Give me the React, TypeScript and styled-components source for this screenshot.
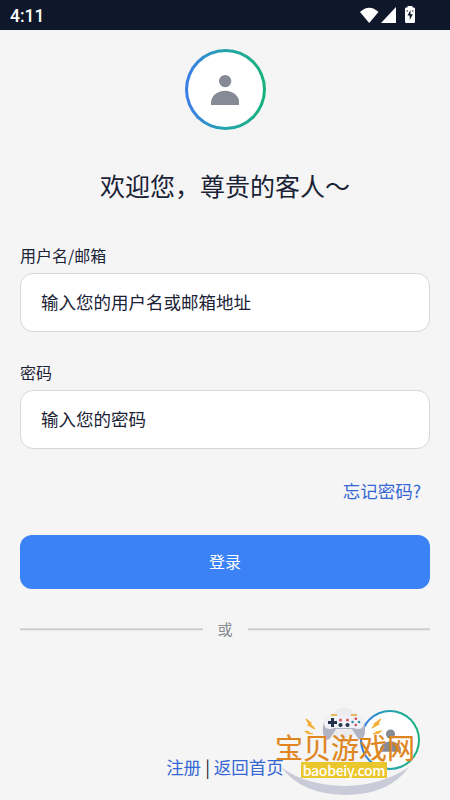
import React from 'react';
import styled, { createGlobalStyle } from 'styled-components';

const GlobalStyle = createGlobalStyle`
  * { box-sizing: border-box; }
  body { margin: 0; background: #f5f5f5; }
  button, input { font-family: inherit; }
`;

const Screen = styled.div`
  position: relative;
  width: 450px;
  height: 800px;
  overflow: hidden;
  display: flex;
  flex-direction: column;
  background: #f5f5f5;
  color: #1a2236;
  font-family: 'Noto Sans CJK SC', sans-serif;
`;

const StatusBar = styled.header`
  height: 30px;
  flex: none;
  display: flex;
  justify-content: space-between;
  padding: 0 34px 0 10px;
  background: #0f172a;
  color: #fff;
`;

const Clock = styled.span`
  font: 500 17.5px/32px Roboto, sans-serif;
`;

const StatusIcons = styled.svg`
  display: block;
  width: 57px;
  height: 30px;
`;

const Main = styled.main`
  flex: 1;
  display: flex;
  flex-direction: column;
  padding: 19px 20px 0;
`;

const Avatar = styled.div<{ $size: number }>`
  width: ${(p) => p.$size}px;
  height: ${(p) => p.$size}px;
  border: ${(p) => (p.$size > 70 ? 3 : 2)}px solid transparent;
  border-radius: 50%;
  background:
    linear-gradient(#fff, #fff) padding-box,
    linear-gradient(90deg, #3b7bea, #23a5ac 50%, #18b37b) border-box;
  display: flex;
  align-items: center;
  justify-content: center;
  svg {
    width: ${(p) => p.$size * 0.35}px;
    height: ${(p) => p.$size * 0.4}px;
    display: block;
  }
`;

const Hero = styled.div`
  display: flex;
  flex-direction: column;
  align-items: center;
`;

const Title = styled.h1`
  margin: 35px 0 0;
  font-size: 25px;
  line-height: 40px;
  font-weight: 400;
  white-space: nowrap;
`;

const Form = styled.form`
  display: flex;
  flex-direction: column;
  margin-top: 38px;
`;

const Field = styled.label`
  display: flex;
  flex-direction: column;
  height: 117px;
  font-size: 16px;
  line-height: 24px;
`;

const Input = styled.input`
  height: 59px;
  margin-top: 6px;
  padding: 0 20px 3px;
  border: 1.5px solid #d5d7da;
  border-radius: 13px;
  background: #fff;
  font-size: 17.5px;
  outline: none;
  &::placeholder { color: #1a2236; opacity: 1; }
`;

const Link = styled.a`
  color: #3568d4;
  font-size: 17.5px;
  text-decoration: none;
`;

const Forgot = styled(Link)`
  align-self: flex-end;
  margin: 1px 9px 0 0;
  line-height: 26px;
`;

const Submit = styled.button`
  height: 54px;
  margin-top: 31px;
  padding: 0 0 2px;
  border: 0;
  border-radius: 12px;
  background: #3b82f6;
  color: #fff;
  font-size: 16px;
`;

const Divider = styled.div`
  display: flex;
  align-items: center;
  gap: 15px;
  height: 24px;
  margin-top: 28px;
  color: #858990;
  font-size: 15px;
  line-height: 24px;
  &::before, &::after {
    content: '';
    flex: 1;
    height: 1.5px;
    background: #cccfd1;
    transform: translateY(0.25px);
  }
`;

const Footer = styled.footer`
  display: flex;
  justify-content: center;
  gap: 4px;
  margin-top: 113px;
  font-size: 17.5px;
  line-height: 26px;
`;

const FloatingAvatar = styled.div`
  position: absolute;
  left: 360px;
  top: 710px;
`;

const Watermark = styled.div`
  position: absolute;
  left: 270px;
  top: 700px;
  width: 160px;
  height: 100px;
`;

const Emblem = styled.svg`
  position: absolute;
  inset: 0;
  width: 160px;
  height: 100px;
`;

const BrandName = styled.div`
  position: absolute;
  left: 5px;
  top: 33px;
  font-size: 28px;
  line-height: 28px;
  color: #df8520;
  white-space: nowrap;
  -webkit-text-stroke: 0.2px #df8520;
`;

const BrandDomain = styled.div`
  position: absolute;
  left: 31px;
  top: 62px;
  width: 86px;
  height: 16px;
  display: flex;
  align-items: center;
  justify-content: center;
  background: #ebc72e;
  color: #fff;
  font-size: 14px;
  font-weight: 500;
  letter-spacing: -0.3px;
  line-height: 14px;
  padding-bottom: 1px;
`;

const Person = () => (
  <svg viewBox="0 0 28 32" fill="#858a94">
    <circle cx="14" cy="8" r="6.1" />
    <path d="M0 31.5v-2a14 12 0 0 1 28 0v2z" />
  </svg>
);

export default function App() {
  return (
    <Screen>
      <GlobalStyle />
      <StatusBar>
        <Clock>4:11</Clock>
        <StatusIcons viewBox="0 0 57 30" fill="#fff">
          <path d="M1 12Q10.2 3.500 19.500 12L10.200 23z" />
          <path d="M22 23 37 7v16z" />
          <g transform="translate(-1)">
            <path d="M49.500 6h5v1.500h1.300q1.200 0 1.200 1.200V21.500q0 1.500-1.500 1.500h-7Q47 23 47 21.500V8.700q0-1.200 1.200-1.200h1.300z" />
            <path d="M52.500 10 49.500 15.500h2.200V20l3.200-5.700h-2.400zM48.500 10.500h1.500v1h-1.500zM54 10.500h1.500v1H54z" fill="#0f172a" />
          </g>
        </StatusIcons>
      </StatusBar>
      <Main>
        <Hero>
          <Avatar $size={81}><Person /></Avatar>
          <Title>欢迎您，尊贵的客人～</Title>
        </Hero>
        <Form onSubmit={(e) => e.preventDefault()}>
          <Field>用户名/邮箱<Input placeholder="输入您的用户名或邮箱地址" /></Field>
          <Field>密码<Input type="password" placeholder="输入您的密码" /></Field>
          <Forgot>忘记密码?</Forgot>
          <Submit>登录</Submit>
        </Form>
        <Divider>或</Divider>
        <Footer>
          <Link>注册</Link><span>|</span><Link>返回首页</Link>
        </Footer>
      </Main>
      <FloatingAvatar><Avatar $size={60}><Person /></Avatar></FloatingAvatar>
      <Watermark>
        <Emblem viewBox="0 0 160 100">
          <circle cx="74" cy="23" r="15" fill="#ececee" />
          <path d="M11 67Q34 85 75 86 113 85 139 67 119 95 75 95 31 94 11 67z" fill="#c9cbd8" />
          <path d="M57 16q4-2 8 0h18q4-2 8 0c4 4 6 17 2 22q-3 4-6-1l-5-8H66l-5 8q-3 5-6 1c-4-5-2-18 2-22z" fill="#b2b4c3" />
          <path d="M57 15q5-1 9 1h16q4-2 9-1c4 3 4 10 1 13q-4 2-8 0H64q-4 2-8 0c-3-3-3-10 1-13z" fill="#f0f0f7" />
          <path d="M61 14h6v2h-6zM81 14h6v2h-6z" fill="#e9b858" />
          <path d="M61 18h3v3h3v3h-3v3h-3v-3h-3v-3h3z" fill="#24324a" />
          <circle cx="70.500" cy="20" r="1.500" fill="#da5260" /><circle cx="77.500" cy="20" r="1.500" fill="#da5260" />
          <circle cx="70.500" cy="25" r="2.100" fill="#26394e" /><circle cx="77.500" cy="25" r="2.100" fill="#26394e" />
          <g fill="#d2404f"><circle cx="85.800" cy="18.800" r="1.300" /><circle cx="85.800" cy="25" r="1.300" /></g>
          <g fill="#368aa0"><circle cx="82.600" cy="22" r="1.300" /><circle cx="89" cy="22" r="1.300" /></g>
          <g fill="#f3af37">
            <path d="m36 19 5 4-1 1 5 5-7-4 1-1zM35 31l4 1v1l4 1-5-.5zM111 19l-7 5 1 1-3 3 7-4-1-1zM111 31l-5 1v1l-3 1 6-1z" stroke="#f3af37" strokeWidth="1.2" />
          </g>
        </Emblem>
        <BrandName>宝贝游戏网</BrandName>
        <BrandDomain>baobeiy.com</BrandDomain>
      </Watermark>
    </Screen>
  );
}
